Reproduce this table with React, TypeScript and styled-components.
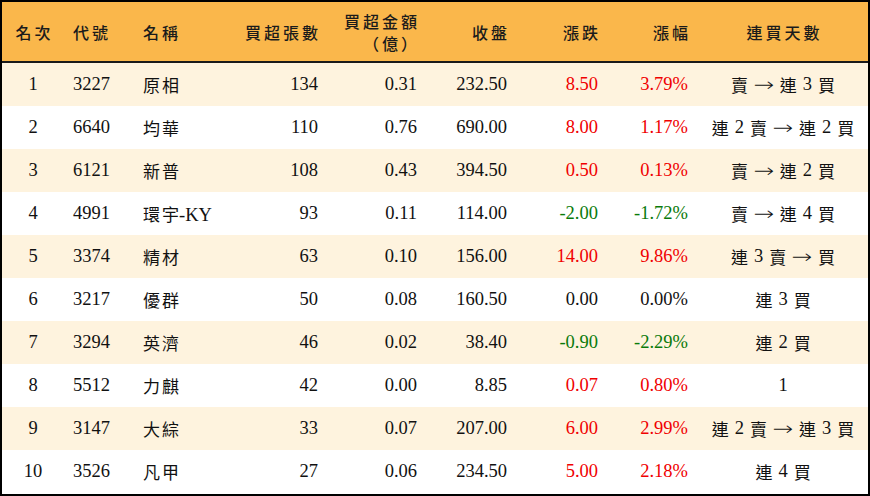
import styled, { createGlobalStyle } from "styled-components";

const GlobalStyle = createGlobalStyle`
  html, body {
    margin: 0;
    padding: 0;
    background: #ffffff;
  }
`;

const Board = styled.div`
  width: 870px;
  height: 496px;
  box-sizing: border-box;
  border: 2px solid #000;
  font-family: "Liberation Serif", "Noto Sans CJK TC", serif;
  color: #111;
  overflow: hidden;
`;

const HeaderRow = styled.div`
  display: flex;
  height: 59px;
  background: #fab74b;
  border-bottom: 2px solid #1a1a1a;
`;

const Row = styled.div<{ $striped: boolean }>`
  display: flex;
  height: 43px;
  background: ${(p) => (p.$striped ? "#fef3de" : "#ffffff")};
`;

type Align = "left" | "right" | "center";

const Cell = styled.div<{ $w: number; $align: Align; $pad?: number }>`
  width: ${(p) => p.$w}px;
  flex: none;
  box-sizing: border-box;
  display: flex;
  flex-direction: column;
  justify-content: center;
  align-items: ${(p) => (p.$align === "left" ? "flex-start" : p.$align === "right" ? "flex-end" : "center")};
  text-align: ${(p) => p.$align};
  padding-left: ${(p) => (p.$align === "left" ? p.$pad ?? 9 : 0)}px;
  padding-right: ${(p) => (p.$align === "right" ? p.$pad ?? 10 : 0)}px;
  font-size: 18.5px;
  white-space: nowrap;
`;

const HeadText = styled.span`
  font-family: "Noto Sans CJK TC", sans-serif;
  font-size: 16px;
  font-weight: 500;
  letter-spacing: 3px;
  margin-right: -3px;
  line-height: 22px;
  color: #1b1b1b;
`;

const NameLine = styled.div`
  display: flex;
  align-items: baseline;
`;

const NameText = styled.span`
  font-size: 17px;
  letter-spacing: 2px;
`;

const Streak = styled.div`
  display: flex;
  align-items: center;
  gap: 6px;
`;

const StreakWord = styled.span`
  font-size: 17px;
`;

const Arrow = styled.span`
  font-family: "DejaVu Sans", sans-serif;
  font-weight: 200;
  font-size: 19px;
  transform: scaleX(1.3);
  margin: 0 2px;
  line-height: 1;
`;

const Change = styled.span<{ $dir: number }>`
  color: ${(p) => (p.$dir > 0 ? "#f00000" : p.$dir < 0 ? "#0a7a0a" : "#111")};
`;

const columns: { w: number; align: Align; pad?: number }[] = [
  { w: 62, align: "center" },
  { w: 70, align: "left" },
  { w: 96, align: "left" },
  { w: 98, align: "right" },
  { w: 99, align: "right" },
  { w: 90, align: "right" },
  { w: 91, align: "right" },
  { w: 90, align: "right" },
  { w: 170, align: "center" },
];

const headers: string[][] = [
  ["名次"],
  ["代號"],
  ["名稱"],
  ["買超張數"],
  ["買超金額", "（億）"],
  ["收盤"],
  ["漲跌"],
  ["漲幅"],
  ["連買天數"],
];

type Stock = {
  rank: number;
  code: string;
  name: string;
  lots: number;
  amount: string;
  close: string;
  change: string;
  pct: string;
  streak: string;
};

const stocks: Stock[] = [
  { rank: 1, code: "3227", name: "原相", lots: 134, amount: "0.31", close: "232.50", change: "8.50", pct: "3.79%", streak: "賣 → 連 3 買" },
  { rank: 2, code: "6640", name: "均華", lots: 110, amount: "0.76", close: "690.00", change: "8.00", pct: "1.17%", streak: "連 2 賣 → 連 2 買" },
  { rank: 3, code: "6121", name: "新普", lots: 108, amount: "0.43", close: "394.50", change: "0.50", pct: "0.13%", streak: "賣 → 連 2 買" },
  { rank: 4, code: "4991", name: "環宇-KY", lots: 93, amount: "0.11", close: "114.00", change: "-2.00", pct: "-1.72%", streak: "賣 → 連 4 買" },
  { rank: 5, code: "3374", name: "精材", lots: 63, amount: "0.10", close: "156.00", change: "14.00", pct: "9.86%", streak: "連 3 賣 → 買" },
  { rank: 6, code: "3217", name: "優群", lots: 50, amount: "0.08", close: "160.50", change: "0.00", pct: "0.00%", streak: "連 3 買" },
  { rank: 7, code: "3294", name: "英濟", lots: 46, amount: "0.02", close: "38.40", change: "-0.90", pct: "-2.29%", streak: "連 2 買" },
  { rank: 8, code: "5512", name: "力麒", lots: 42, amount: "0.00", close: "8.85", change: "0.07", pct: "0.80%", streak: "1" },
  { rank: 9, code: "3147", name: "大綜", lots: 33, amount: "0.07", close: "207.00", change: "6.00", pct: "2.99%", streak: "連 2 賣 → 連 3 買" },
  { rank: 10, code: "3526", name: "凡甲", lots: 27, amount: "0.06", close: "234.50", change: "5.00", pct: "2.18%", streak: "連 4 買" },
];

const renderName = (name: string) => {
  const m = name.match(/^([^-A-Za-z]+)(.*)$/);
  if (!m) return <NameText>{name}</NameText>;
  return (
    <>
      <NameText>{m[1]}</NameText>
      {m[2] && <span style={{ marginLeft: -2 }}>{m[2]}</span>}
    </>
  );
};

const renderStreak = (streak: string) =>
  streak.split(" ").map((t, i) => {
    if (t === "→") return <Arrow key={i}>→</Arrow>;
    if (/^\d+$/.test(t)) return <span key={i}>{t}</span>;
    return <StreakWord key={i}>{t}</StreakWord>;
  });

export default function App() {
  return (
    <>
      <GlobalStyle />
      <Board>
        <HeaderRow>
          {headers.map((lines, i) => (
            <Cell key={i} $w={columns[i].w} $align={columns[i].align} $pad={columns[i].pad}>
              {lines.map((l) => (
                <HeadText key={l}>{l}</HeadText>
              ))}
            </Cell>
          ))}
        </HeaderRow>
        {stocks.map((s, r) => {
          const dir = parseFloat(s.change);
          return (
            <Row key={s.code} $striped={r % 2 === 0}>
              <Cell $w={columns[0].w} $align="center">{s.rank}</Cell>
              <Cell $w={columns[1].w} $align="left">{s.code}</Cell>
              <Cell $w={columns[2].w} $align="left">
                <NameLine>{renderName(s.name)}</NameLine>
              </Cell>
              <Cell $w={columns[3].w} $align="right">{s.lots}</Cell>
              <Cell $w={columns[4].w} $align="right">{s.amount}</Cell>
              <Cell $w={columns[5].w} $align="right">{s.close}</Cell>
              <Cell $w={columns[6].w} $align="right">
                <Change $dir={dir}>{s.change}</Change>
              </Cell>
              <Cell $w={columns[7].w} $align="right">
                <Change $dir={dir}>{s.pct}</Change>
              </Cell>
              <Cell $w={columns[8].w} $align="center">
                <Streak>{renderStreak(s.streak)}</Streak>
              </Cell>
            </Row>
          );
        })}
      </Board>
    </>
  );
}
